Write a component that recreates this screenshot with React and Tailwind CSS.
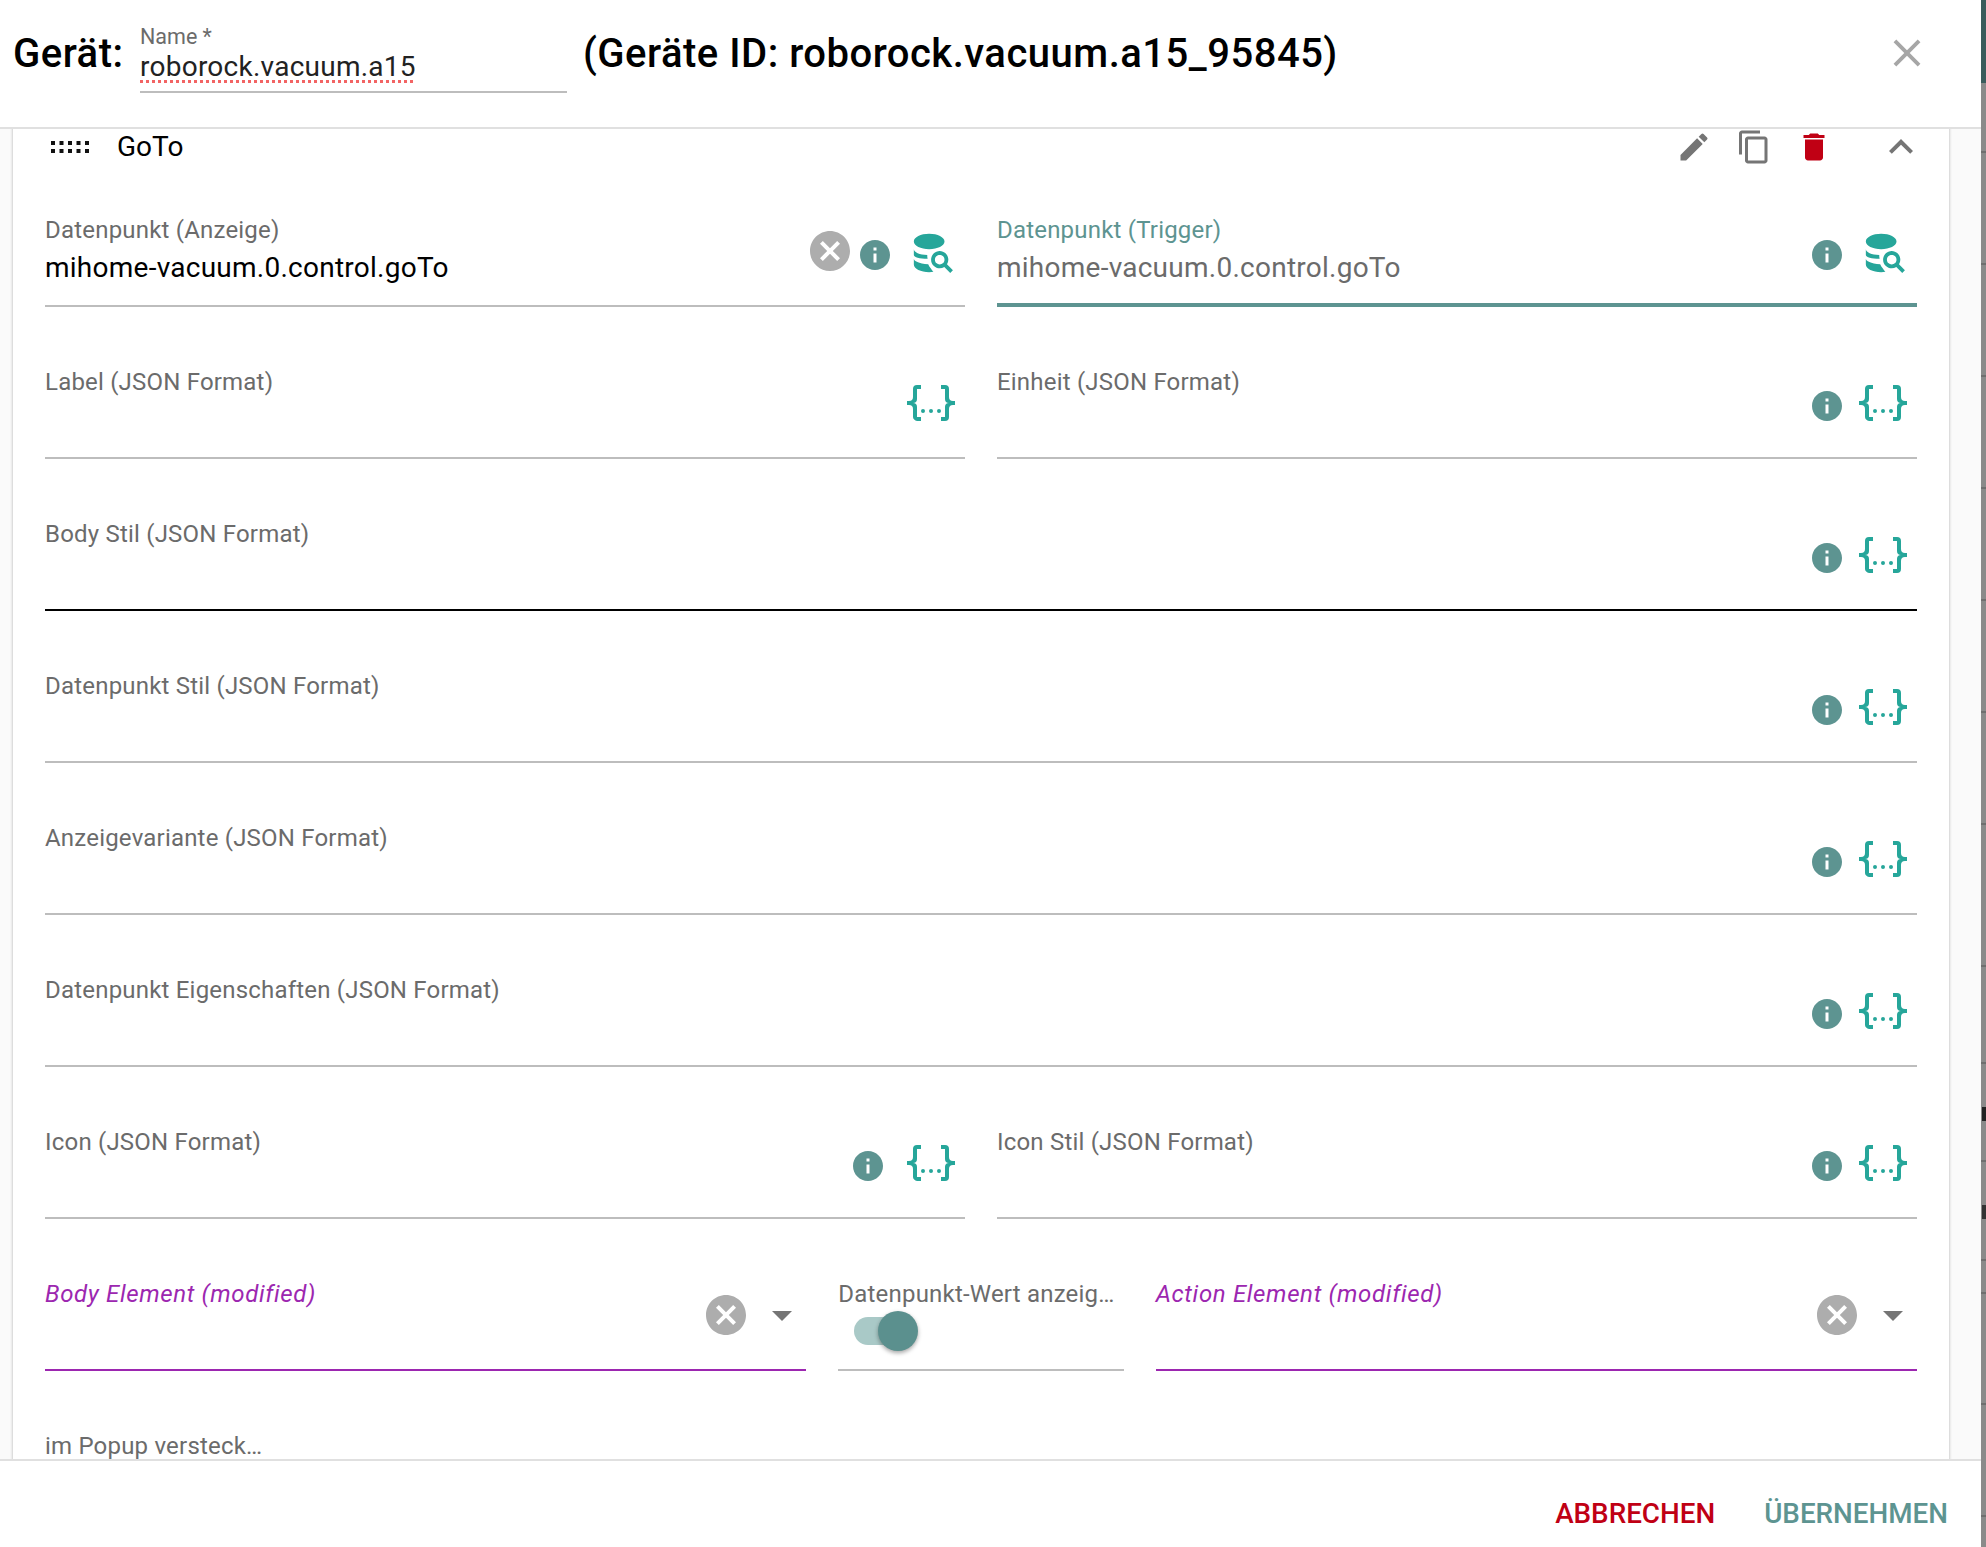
import React from 'react';
import { MdEdit, MdContentCopy, MdDelete, MdExpandLess, MdClose, MdInfo, MdCancel, MdArrowDropDown } from 'react-icons/md';

const JSON_PATH = 'M5,3H7V5H5V10A2,2 0 0,1 3,12A2,2 0 0,1 5,14V19H7V21H5C3.93,20.73 3,20.1 3,19V15A2,2 0 0,0 1,13H0V11H1A2,2 0 0,0 3,9V5A2,2 0 0,1 5,3M19,3A2,2 0 0,1 21,5V9A2,2 0 0,0 23,11H24V13H23A2,2 0 0,0 21,15V19A2,2 0 0,1 19,21H17V19H19V14A2,2 0 0,1 21,12A2,2 0 0,1 19,10V5H17V3H19M12,15A1,1 0 0,1 13,16A1,1 0 0,1 12,17A1,1 0 0,1 11,16A1,1 0 0,1 12,15M8,15A1,1 0 0,1 9,16A1,1 0 0,1 8,17A1,1 0 0,1 7,16A1,1 0 0,1 8,15M16,15A1,1 0 0,1 17,16A1,1 0 0,1 16,17A1,1 0 0,1 15,16A1,1 0 0,1 16,15Z';
const DB_SEARCH_PATH = 'M18.68,12.32C16.92,10.56 14.07,10.56 12.32,12.32C10.56,14.07 10.56,16.92 12.32,18.68C13.81,20.17 16.11,20.43 17.89,19.32L21,22.39L22.39,21L19.3,17.89C20.43,16.12 20.17,13.8 18.68,12.32M17.27,17.27C16.29,18.25 14.71,18.24 13.73,17.27C12.76,16.29 12.76,14.71 13.73,13.73C14.71,12.76 16.29,12.76 17.27,13.73C18.24,14.71 18.24,16.29 17.27,17.27M10.9,20.1C11.25,20.74 11.69,21.32 12.2,21.82C11.5,21.94 10.77,22 10,22C5.58,22 2,20.21 2,18V15C2,16.1 4.5,17.6 9.5,17.9C9.8,18.7 10.3,19.5 10.9,20.1M2,13V10C2,11.4 5,13 9,13C9,13.7 9,14.3 9.2,15C5,14.9 2,14.2 2,13M10,2C14.42,2 18,3.79 18,6C18,8.21 14.42,10 10,10C5.58,10 2,8.21 2,6C2,3.79 5.58,2 10,2Z';

// row heights of the dimmed page behind the dialog
const BACKDROP_ROWS = [70, 112, 112, 112, 112, 112, 112, 142, 97, 98, 99, 33, 111, 112];

const InfoIcon = ({ className = '' }) => <MdInfo className={`text-[36px] text-[#5d9491] ${className}`} />;
const ClearIcon = () => <MdCancel className="text-[48px] text-[#adadad]" />;
const JsonIcon = () => (
  <svg viewBox="0 0 24 24" className="w-12 h-12 fill-[#26a69a]"><path d={JSON_PATH} /></svg>
);
const DbIcon = () => (
  <svg viewBox="0 0 24 24" className="w-[46px] h-[46px] fill-[#26a69a]"><path d={DB_SEARCH_PATH} /></svg>
);

const Label = ({ children, className = 'text-[#6b6b6b] tracking-[0.2px]' }) => (
  <div className={`h-[29px] pt-px leading-7 text-[24px] whitespace-nowrap ${className}`}>{children}</div>
);

const Field = ({ label, value, valueClass = 'text-black', labelClass, line = 'border-b-2 border-[#bdbdbd]', span = 'col-span-6', children, control }) => (
  <div className={`${span} h-[92px] flex ${line}`}>
    <div className="flex-1 min-w-0">
      <Label className={labelClass}>{label}</Label>
      {value && <div className={`mt-[6px] h-9 leading-9 text-[28px] tracking-[0.25px] ${valueClass}`}>{value}</div>}
      {control}
    </div>
    {children}
  </div>
);

// icons on the right side of a field
const JsonEnd = ({ info = true, gap = 'mr-[14px]' }) => (
  <div className="flex items-center h-[72px] pr-[10px]">
    {info && <InfoIcon className={`mt-[5px] ${gap}`} />}
    <JsonIcon />
  </div>
);

const DbEnd = ({ clear }) => (
  <div className="flex items-center h-[76px] pr-[9px]">
    {clear && <span className="-mt-1 mr-[3px]"><ClearIcon /></span>}
    <InfoIcon className="mt-[3px]" />
    <span className="ml-[17px] -mt-[1px]"><DbIcon /></span>
  </div>
);

const SelectEnd = () => (
  <div className="flex items-center h-[72px]">
    <ClearIcon />
    <MdArrowDropDown className="ml-2 text-[48px] text-[#757575]" />
  </div>
);

const Toggle = () => (
  <div className="relative mt-[3px] ml-[16px] w-[64px] h-[40px] flex items-center">
    <div className="w-[60px] h-7 rounded-full bg-[#a9c9c7]" />
    <div className="absolute left-6 top-0 w-10 h-10 rounded-full bg-[#5b908e] shadow-[0_2px_4px_rgba(0,0,0,0.35)]" />
  </div>
);

const DragHandle = () => (
  <svg width="38" height="12" className="fill-[#111]">
    {[0, 8.5, 17, 25.5, 34].map((x) => (
      <g key={x}>
        <rect x={x} y="0" width="4" height="4" />
        <rect x={x} y="8" width="4" height="4" />
      </g>
    ))}
  </svg>
);

export default function App() {
  return (
    <div className="flex h-[1547px] overflow-hidden bg-[#8a8a8a] font-['Roboto',sans-serif]">
      <div className="w-[1981px] h-full flex flex-col bg-white">
        {/* header */}
        <div className="h-[129px] shrink-0 border-b-2 border-[#e0e0e0] flex items-start">
          <div className="ml-[13px] mt-[30px] w-[127px] text-[40px] leading-[48px] tracking-[0.5px] font-medium text-black">Gerät:</div>
          <div className="w-[427px] h-[93px] border-b-2 border-[#bdbdbd]">
            <div className="mt-[23px] h-7 leading-7 text-[21.5px] text-[#6b6b6b]">Name *</div>
            <div className="mt-[-2px] h-9 leading-9 text-[28px] tracking-[0.25px] text-[#222] underline decoration-dotted decoration-[#f26464] decoration-[3px] underline-offset-[4px]">roborock.vacuum.a15</div>
          </div>
          <div className="ml-[16px] mt-[30px] text-[40px] leading-[48px] tracking-[0.5px] font-medium text-black whitespace-nowrap">(Geräte ID: roborock.vacuum.a15_95845)</div>
          <MdClose className="ml-auto mt-[30px] mr-[51px] text-[46px] text-[#a6a6a6]" />
        </div>

        {/* scrolled content */}
        <div className="flex-1 min-h-0 overflow-hidden bg-[#fafafa]">
          <div className="-mt-[10px] ml-[13px] w-[1936px] bg-white shadow-[0_0_3px_rgba(0,0,0,0.3)] px-8 pb-20">
            <div className="h-[56px] flex items-center">
              <span className="ml-[6px]"><DragHandle /></span>
              <span className="ml-[28px] text-[28px] text-black">GoTo</span>
              <div className="ml-auto flex items-center text-[#757575]">
                <MdEdit className="text-[36px]" />
                <MdContentCopy className="ml-[24px] text-[36px]" />
                <MdDelete className="ml-[24px] text-[36px] text-[#c00014]" />
                <MdExpandLess className="ml-[45px] mr-[-8px] text-[48px]" />
              </div>
            </div>

            <div className="pt-[40px] grid grid-cols-12 gap-x-8 gap-y-[60px]">
              <Field label="Datenpunkt (Anzeige)" value="mihome-vacuum.0.control.goTo"><DbEnd clear /></Field>
              <Field label="Datenpunkt (Trigger)" labelClass="text-[#5d9491] tracking-[0.2px]" value="mihome-vacuum.0.control.goTo" valueClass="text-[#6b6b6b]" line="border-b-4 border-[#5d9491]"><DbEnd /></Field>

              <Field label="Label (JSON Format)"><JsonEnd info={false} /></Field>
              <Field label="Einheit (JSON Format)"><JsonEnd /></Field>

              <Field span="col-span-12" label="Body Stil (JSON Format)" line="border-b-2 border-black"><JsonEnd /></Field>
              <Field span="col-span-12" label="Datenpunkt Stil (JSON Format)"><JsonEnd /></Field>
              <Field span="col-span-12" label="Anzeigevariante (JSON Format)"><JsonEnd /></Field>
              <Field span="col-span-12" label="Datenpunkt Eigenschaften (JSON Format)"><JsonEnd /></Field>

              <Field label="Icon (JSON Format)"><JsonEnd gap="mr-[21px]" /></Field>
              <Field label="Icon Stil (JSON Format)"><JsonEnd /></Field>

              <Field span="col-span-5" label="Body Element (modified)" labelClass="text-[#9c27b0] italic tracking-[0.65px]" line="border-b-2 border-[#9c27b0]"><SelectEnd /></Field>
              <Field span="col-span-2" label="Datenpunkt-Wert anzeig…" control={<Toggle />} />
              <Field span="col-span-5" label="Action Element (modified)" labelClass="text-[#9c27b0] italic tracking-[0.65px]" line="border-b-2 border-[#9c27b0]"><SelectEnd /></Field>

              <Field span="col-span-2" label="im Popup versteck…" line="border-b-2 border-transparent" />
            </div>
          </div>
        </div>

        {/* footer */}
        <div className="h-[88px] shrink-0 border-t-2 border-[#e0e0e0] bg-white flex items-center justify-end gap-[49px] pt-5 pr-[33px] text-[27.8px] font-medium">
          <span className="text-[#c00014]">ABBRECHEN</span>
          <span className="text-[#5d9491]">ÜBERNEHMEN</span>
        </div>
      </div>

      {/* dimmed page showing at the right edge */}
      <div className="relative flex-1 flex flex-col">
        <div className="h-[83px] shrink-0 bg-[#3a5c5c]" />
        {BACKDROP_ROWS.map((h, i) => (
          <div key={i} className="shrink-0 border-b-2 border-[#6f6f6f]" style={{ height: h }} />
        ))}
        <div className="absolute right-0 top-[1107px] w-1 h-[14px] bg-[#222]" />
        <div className="absolute right-0 top-[1205px] w-1 h-[14px] bg-[#333]" />
      </div>
    </div>
  );
}
